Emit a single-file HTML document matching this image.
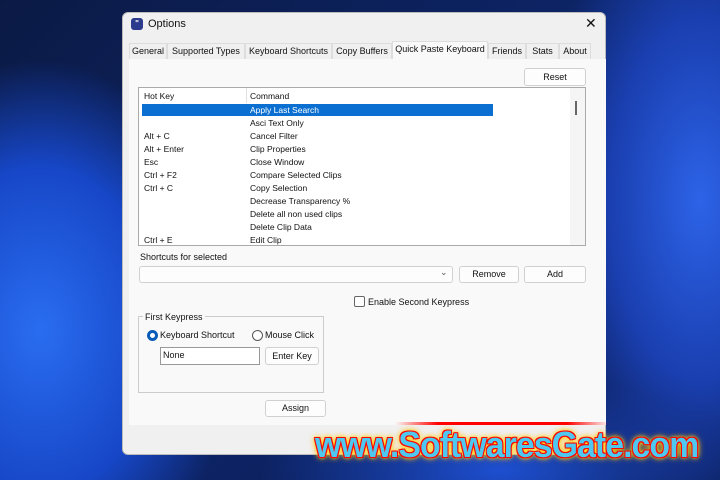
<!DOCTYPE html>
<html><head><meta charset="utf-8"><style>
*{margin:0;padding:0;box-sizing:border-box}
body{width:720px;height:480px;overflow:hidden;position:relative;font-family:"Liberation Sans",sans-serif;font-size:9px;color:#111;
background:radial-gradient(ellipse 260px 360px at 40px 330px,#2a6df0 0%,#1747c8 45%,rgba(10,30,100,0) 75%),
radial-gradient(ellipse 200px 400px at 700px 200px,#2d63e8 0%,#1a3fb0 45%,rgba(10,30,100,0) 80%),
radial-gradient(ellipse 300px 120px at 500px 470px,#1e4fd0 0%,rgba(10,30,100,0) 80%),
linear-gradient(135deg,#0b1a45 0%,#0d2466 50%,#0a1a4e 100%)}
.a{position:absolute}
.win{left:122px;top:12px;width:484px;height:443px;background:#f0f0f0;border-radius:6px;border:1px solid #bbb}
.panel{left:129px;top:59px;width:477px;height:366px;background:#f9f9f9}
.tab{position:absolute;top:43px;height:16px;border:1px solid #ddd;border-bottom:none;background:#f0f0f0;font-size:9px;line-height:15px;text-align:center}
.btn{position:absolute;background:#fdfdfd;border:1px solid #d0d0d0;border-radius:3px;text-align:center;font-size:9px}
.row{position:absolute;font-size:8.5px;height:13px;line-height:13px}
</style></head><body>
<div class="a win"></div>
<div class="a" style="left:131px;top:18px;width:12px;height:12px;background:#2b3a8c;border-radius:3px;color:#fff;font-size:8px;line-height:12px;text-align:center;font-weight:bold">"</div>
<div class="a" style="left:148px;top:18px;font-size:11px">Options</div>
<div class="a" style="left:585px;top:15px;font-size:14px">✕</div>
<div class="a panel"></div>
<div class="tab" style="left:129px;width:38px">General</div>
<div class="tab" style="left:167px;width:78px">Supported Types</div>
<div class="tab" style="left:245px;width:87px">Keyboard Shortcuts</div>
<div class="tab" style="left:332px;width:60px">Copy Buffers</div>
<div class="tab" style="left:392px;top:41px;height:18px;width:96px;background:#f9f9f9">Quick Paste Keyboard</div>
<div class="tab" style="left:488px;width:38px">Friends</div>
<div class="tab" style="left:526px;width:33px">Stats</div>
<div class="tab" style="left:559px;width:32px">About</div>
<div class="btn" style="left:524px;top:68px;width:62px;height:18px;line-height:16px">Reset</div>
<div class="a" style="left:138px;top:87px;width:448px;height:159px;background:#fff;border:1px solid #aaa"></div>
<div class="a" style="left:246px;top:88px;width:1px;height:15px;background:#e0e0e0"></div>
<div class="a" style="left:570px;top:88px;width:15px;height:157px;background:#f5f5f5"></div>
<div class="a" style="left:575px;top:101px;width:2px;height:14px;background:#666"></div>
<div class="row" style="left:144px;top:90px">Hot Key</div>
<div class="row" style="left:250px;top:90px">Command</div>
<div class="a" style="left:142px;top:104px;width:351px;height:12px;background:#0a6fd0"></div>
<div class="row" style="left:250px;top:104px;color:#fff">Apply Last Search</div>
<div class="row" style="left:250px;top:117px">Asci Text Only</div>
<div class="row" style="left:144px;top:130px">Alt + C</div><div class="row" style="left:250px;top:130px">Cancel Filter</div>
<div class="row" style="left:144px;top:143px">Alt + Enter</div><div class="row" style="left:250px;top:143px">Clip Properties</div>
<div class="row" style="left:144px;top:156px">Esc</div><div class="row" style="left:250px;top:156px">Close Window</div>
<div class="row" style="left:144px;top:169px">Ctrl + F2</div><div class="row" style="left:250px;top:169px">Compare Selected Clips</div>
<div class="row" style="left:144px;top:182px">Ctrl + C</div><div class="row" style="left:250px;top:182px">Copy Selection</div>
<div class="row" style="left:250px;top:195px">Decrease Transparency %</div>
<div class="row" style="left:250px;top:208px">Delete all non used clips</div>
<div class="row" style="left:250px;top:221px">Delete Clip Data</div>
<div class="row" style="left:144px;top:234px">Ctrl + E</div><div class="row" style="left:250px;top:234px">Edit Clip</div>
<div class="a" style="left:140px;top:252px;font-size:9px">Shortcuts for selected</div>
<div class="a" style="left:139px;top:266px;width:314px;height:17px;background:#fdfdfd;border:1px solid #d0d0d0;border-radius:3px"></div>
<div class="a" style="left:440px;top:267px;font-size:9px;color:#555">⌄</div>
<div class="btn" style="left:459px;top:266px;width:60px;height:17px;line-height:15px">Remove</div>
<div class="btn" style="left:524px;top:266px;width:62px;height:17px;line-height:15px">Add</div>
<div class="a" style="left:354px;top:296px;width:11px;height:11px;border:1px solid #666;border-radius:2px;background:#fff"></div>
<div class="a" style="left:368px;top:297px">Enable Second Keypress</div>
<div class="a" style="left:138px;top:316px;width:186px;height:77px;border:1px solid #ccc"></div>
<div class="a" style="left:143px;top:312px;background:#f9f9f9;padding:0 2px">First Keypress</div>
<div class="a" style="left:147px;top:330px;width:11px;height:11px;border-radius:50%;border:3px solid #0a5cb8;background:#fff"></div>
<div class="a" style="left:160px;top:330px">Keyboard Shortcut</div>
<div class="a" style="left:252px;top:330px;width:11px;height:11px;border-radius:50%;border:1px solid #555;background:#fff"></div>
<div class="a" style="left:265px;top:330px">Mouse Click</div>
<div class="a" style="left:160px;top:347px;width:100px;height:18px;border:1px solid #999;background:#fff;padding:2px 2px;font-size:9px">None</div>
<div class="btn" style="left:265px;top:347px;width:54px;height:18px;line-height:16px">Enter Key</div>
<div class="btn" style="left:265px;top:400px;width:61px;height:17px;line-height:15px">Assign</div>
<div class="a" style="left:395px;top:422px;width:215px;height:3px;background:linear-gradient(90deg,rgba(255,0,0,0),#f00 20%,#f00 80%,rgba(255,0,0,0))"></div>
<div class="a" style="left:315px;top:424px;font-size:36px;font-weight:bold;color:#4fc8f0;letter-spacing:-1px;transform-origin:0 0;transform:scaleX(0.94);text-shadow:0 0 2px #f00,1px 1px 0 #f00,-1px -1px 0 #f00,1px -1px 0 #f00,-1px 1px 0 #f00,0 0 4px #ff0,0 0 6px #fc0,0 0 8px #fa0">www.SoftwaresGate.com</div>
</body></html>
